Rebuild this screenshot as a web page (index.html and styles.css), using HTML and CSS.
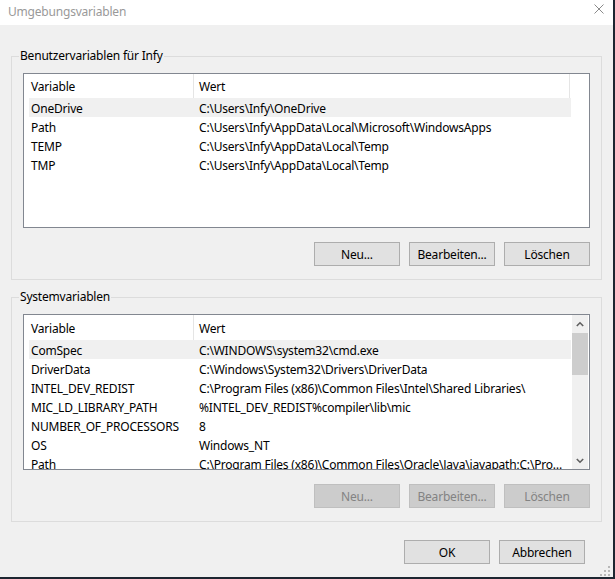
FILE: index.html
```html
<!DOCTYPE html>
<html lang="de">
<head>
  <meta charset="UTF-8">
  <title>Umgebungsvariablen</title>
  <link rel="stylesheet" href="styles.css">
</head>
<body>
  <div class="window">
    <div class="titlebar">
      <span class="title">Umgebungsvariablen</span>
      <svg class="close" width="10" height="10" viewBox="0 0 10 10">
        <path d="M0.5 0.5 L9.5 9.5 M9.5 0.5 L0.5 9.5" stroke="#8a8a8a" stroke-width="1" fill="none"/>
      </svg>
    </div>

    <div class="content">
      <div class="group">
        <div class="group-title">Benutzervariablen für Infy</div>
        <div class="list user">
          <div class="table">
            <div class="list-head">
              <div class="head-name">Variable</div>
              <div class="head-value">Wert</div>
            </div>
            <div class="row selected">
              <div class="cell-name">OneDrive</div>
              <div class="cell-value">C:\Users\Infy\OneDrive</div>
            </div>
            <div class="row">
              <div class="cell-name">Path</div>
              <div class="cell-value">C:\Users\Infy\AppData\Local\Microsoft\WindowsApps</div>
            </div>
            <div class="row">
              <div class="cell-name">TEMP</div>
              <div class="cell-value">C:\Users\Infy\AppData\Local\Temp</div>
            </div>
            <div class="row">
              <div class="cell-name">TMP</div>
              <div class="cell-value">C:\Users\Infy\AppData\Local\Temp</div>
            </div>
          </div>
        </div>
        <div class="actions">
          <button class="btn">Neu...</button>
          <button class="btn">Bearbeiten...</button>
          <button class="btn">Löschen</button>
        </div>
      </div>

      <div class="group system-group">
        <div class="group-title">Systemvariablen</div>
        <div class="list system">
          <div class="table">
            <div class="list-head">
              <div class="head-name">Variable</div>
              <div class="head-value">Wert</div>
            </div>
            <div class="row selected">
              <div class="cell-name">ComSpec</div>
              <div class="cell-value">C:\WINDOWS\system32\cmd.exe</div>
            </div>
            <div class="row">
              <div class="cell-name">DriverData</div>
              <div class="cell-value">C:\Windows\System32\Drivers\DriverData</div>
            </div>
            <div class="row">
              <div class="cell-name">INTEL_DEV_REDIST</div>
              <div class="cell-value">C:\Program Files (x86)\Common Files\Intel\Shared Libraries\</div>
            </div>
            <div class="row">
              <div class="cell-name">MIC_LD_LIBRARY_PATH</div>
              <div class="cell-value">%INTEL_DEV_REDIST%compiler\lib\mic</div>
            </div>
            <div class="row">
              <div class="cell-name">NUMBER_OF_PROCESSORS</div>
              <div class="cell-value">8</div>
            </div>
            <div class="row">
              <div class="cell-name">OS</div>
              <div class="cell-value">Windows_NT</div>
            </div>
            <div class="row">
              <div class="cell-name">Path</div>
              <div class="cell-value">C:\Program Files (x86)\Common Files\Oracle\Java\javapath;C:\Program Files (x86)\Intel\iCLS Client\</div>
            </div>
          </div>
          <div class="scrollbar">
            <div class="scroll-btn">
              <svg width="8" height="6" viewBox="0 0 8 6"><path d="M0.8 5 L4 1.8 L7.2 5" stroke="#606060" stroke-width="1.6" fill="none"/></svg>
            </div>
            <div class="thumb"></div>
            <div class="track"></div>
            <div class="scroll-btn">
              <svg width="8" height="6" viewBox="0 0 8 6"><path d="M0.8 1 L4 4.2 L7.2 1" stroke="#606060" stroke-width="1.6" fill="none"/></svg>
            </div>
          </div>
        </div>
        <div class="actions">
          <button class="btn" disabled>Neu...</button>
          <button class="btn" disabled>Bearbeiten...</button>
          <button class="btn" disabled>Löschen</button>
        </div>
      </div>

      <div class="dialog-actions">
        <button class="btn">OK</button>
        <button class="btn">Abbrechen</button>
      </div>
    </div>

    <!-- size grip -->
    <svg class="grip" width="11" height="10" viewBox="0 0 11 10">
      <rect x="8" y="0" width="2" height="2" fill="#b8b8b8"/>
      <rect x="4" y="4" width="2" height="2" fill="#b8b8b8"/>
      <rect x="8" y="4" width="2" height="2" fill="#b8b8b8"/>
      <rect x="0" y="8" width="2" height="2" fill="#b8b8b8"/>
      <rect x="4" y="8" width="2" height="2" fill="#b8b8b8"/>
      <rect x="8" y="8" width="2" height="2" fill="#b8b8b8"/>
    </svg>
  </div>
</body>
</html>
```

FILE: styles.css
```css
html {
  background: #1d2631;
}

body {
  margin: 0;
  font-family: "Segoe UI", "Noto Sans", sans-serif;
  font-size: 12px;
  letter-spacing: -0.2px;
  color: #000;
}

.window {
  position: relative;
  width: 613px;
  height: 577px;
  background: #f0f0f0;
  overflow: hidden;
}

.titlebar {
  display: flex;
  align-items: flex-start;
  justify-content: space-between;
  height: 25px;
  padding: 0 9px 0 8px;
  box-sizing: border-box;
  background: #fff;
}

.title {
  margin-top: 4px;
  line-height: 16px;
  color: #999;
}

.close {
  margin-top: 4px;
}

.content {
  padding: 0 11px;
}

/* group boxes */
.group {
  margin-top: 31px;
  padding: 0 11px 13px;
  border: 1px solid #dcdcdc;
}

.system-group {
  margin-top: 17px;
}

.group-title {
  width: fit-content;
  margin: -9px 0 0 -4px;
  padding: 0 1px;
  line-height: 16px;
  background: #f0f0f0;
}

/* list views */
.list {
  display: flex;
  margin-top: 9px;
  height: 155px;
  box-sizing: border-box;
  border: 1px solid #828790;
  background: #fff;
  overflow: hidden;
}

.list.system {
  height: 156px;
}

.table {
  flex: 1;
  min-width: 0;
  overflow: hidden;
}

.list-head {
  display: flex;
  height: 24px;
  line-height: 26px;
  overflow: hidden;
}

.system .list-head {
  height: 25px;
  line-height: 27px;
}

.head-name {
  width: 170px;
  padding-left: 7px;
  box-sizing: border-box;
  border-right: 1px solid #e5e5e5;
}

.head-value {
  width: 376px;
  padding-left: 5px;
  box-sizing: border-box;
  border-right: 1px solid #e5e5e5;
}

.system .head-value {
  border-right: none;
}

.row {
  display: flex;
  width: 542px;
  height: 19px;
  margin-left: 5px;
  line-height: 21px;
  white-space: nowrap;
}

.row.selected {
  background: #f0f0f0;
}

.cell-name {
  width: 164px;
  padding-left: 2px;
  box-sizing: border-box;
  overflow: hidden;
}

.cell-value {
  flex: 1;
  min-width: 0;
  padding: 0 8px 0 6px;
  overflow: hidden;
  text-overflow: ellipsis;
}

/* scrollbar */
.scrollbar {
  display: flex;
  flex-direction: column;
  width: 16px;
  margin-right: 1px;
  background: #f0f0f0;
}

.scroll-btn {
  display: flex;
  align-items: center;
  justify-content: center;
  height: 17px;
}

.thumb {
  height: 42px;
  margin-top: 1px;
  background: #cdcdcd;
}

.track {
  flex: 1;
}

/* buttons */
.actions,
.dialog-actions {
  display: flex;
  justify-content: flex-end;
  gap: 9px;
  margin-top: 14px;
}

.dialog-actions {
  margin-top: 18px;
  padding-right: 17px;
}

.btn {
  width: 86px;
  height: 24px;
  padding: 0;
  box-sizing: border-box;
  border: 1px solid #adadad;
  background: #e1e1e1;
  font: inherit;
  letter-spacing: inherit;
  color: #000;
}

.btn:disabled {
  border-color: #bfbfbf;
  background: #cccccc;
  color: #838383;
}

.grip {
  position: absolute;
  right: 2px;
  bottom: 1px;
}
```
